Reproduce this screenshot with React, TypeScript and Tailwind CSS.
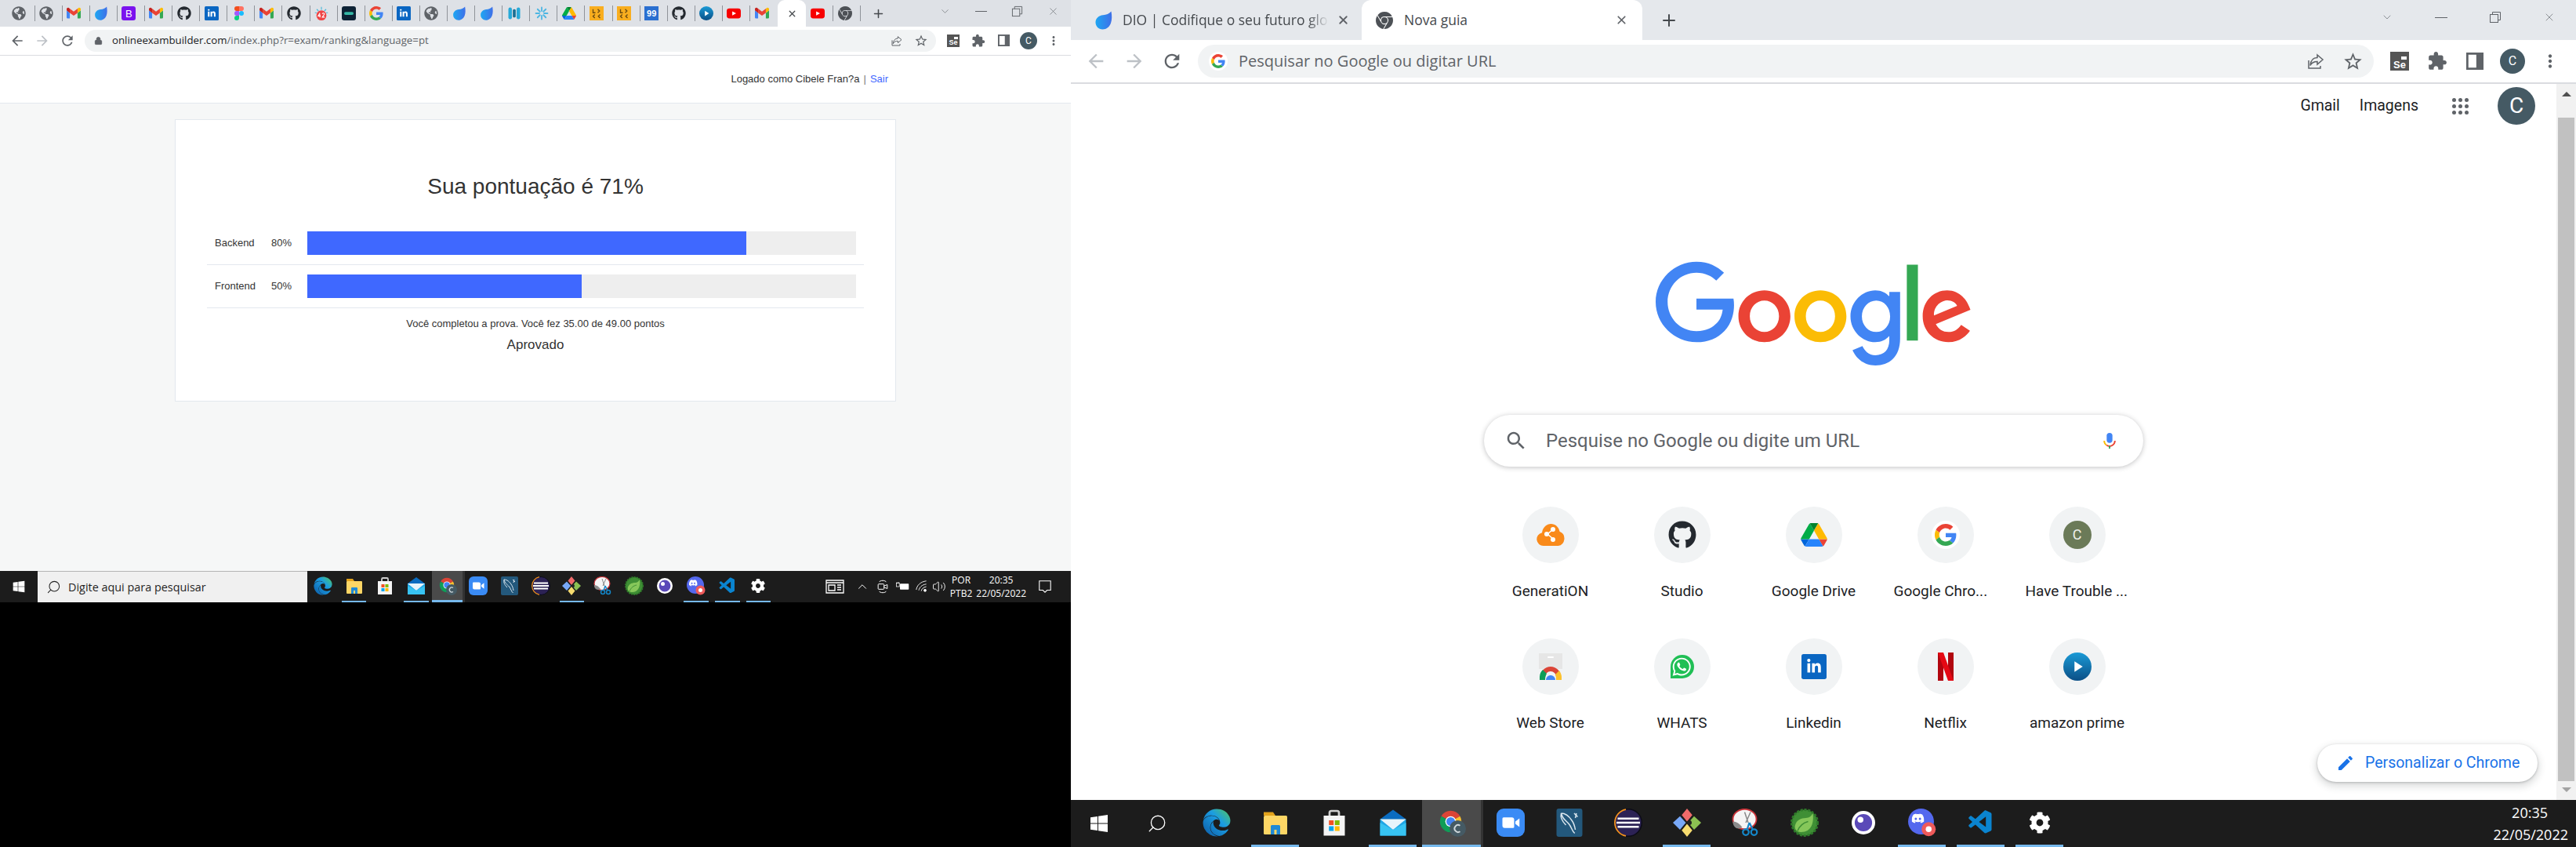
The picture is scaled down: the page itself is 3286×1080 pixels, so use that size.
import type { ReactNode } from "react";
import { ChevronDown, ChevronUp, Lock, Plus, Search, Volume2, X } from "lucide-react";
import { FaCog, FaEdge, FaGithub, FaGlobeAmericas, FaWhatsapp } from "react-icons/fa";
import { SiDiscord, SiGooglechrome } from "react-icons/si";
import { VscVscode } from "react-icons/vsc";

type IconProps = { className?: string };

const sans = "font-['Open_Sans',sans-serif]";
const arial = "font-['Liberation_Sans',Arial,sans-serif]";
const roboto = "font-['Roboto',sans-serif]";

/* ---------- material glyphs used by the browser chrome ---------- */

const material = (d: string) =>
  function MaterialIcon({ className }: IconProps) {
    return (
      <svg viewBox="0 0 24 24" className={className} fill="currentColor">
        <path d={d} />
      </svg>
    );
  };

const ArrowBack = material("M20 11H7.83l5.59-5.59L12 4l-8 8 8 8 1.41-1.41L7.83 13H20v-2z");
const ArrowForward = material("M4 11h12.17l-5.59-5.59L12 4l8 8-8 8-1.41-1.41L16.17 13H4v-2z");
const Reload = material("M17.65 6.35C16.2 4.9 14.21 4 12 4c-4.42 0-7.99 3.58-7.99 8s3.57 8 7.99 8c3.73 0 6.84-2.55 7.73-6h-2.08c-.82 2.33-3.04 4-5.65 4-3.31 0-6-2.69-6-6s2.69-6 6-6c1.66 0 3.14.69 4.22 1.78L13 11h7V4l-2.35 2.35z");
const StarBorder = material("M22 9.24l-7.19-.62L12 2 9.19 8.63 2 9.24l5.46 4.73L5.82 21 12 17.27 18.18 21l-1.63-7.03L22 9.24zM12 15.4l-3.76 2.27 1-4.28-3.32-2.88 4.38-.38L12 6.1l1.71 4.04 4.38.38-3.32 2.88 1 4.28L12 15.4z");
const Extension = material("M20.5 11H19V7c0-1.1-.9-2-2-2h-4V3.5C13 2.12 11.88 1 10.5 1S8 2.12 8 3.5V5H4c-1.1 0-1.99.9-1.99 2v3.8H3.5c1.49 0 2.7 1.21 2.7 2.7s-1.21 2.7-2.7 2.7H2V20c0 1.1.9 2 2 2h3.8v-1.5c0-1.49 1.21-2.7 2.7-2.7 1.49 0 2.7 1.21 2.7 2.7V22H17c1.1 0 2-.9 2-2v-4h1.5c1.38 0 2.5-1.12 2.5-2.5S21.88 11 20.5 11z");
const MoreDots = material("M12 8c1.1 0 2-.9 2-2s-.9-2-2-2-2 .9-2 2 .9 2 2 2zm0 2c-1.1 0-2 .9-2 2s.9 2 2 2 2-.9 2-2-.9-2-2-2zm0 6c-1.1 0-2 .9-2 2s.9 2 2 2 2-.9 2-2-.9-2-2-2z");
const SearchGlass = material("M15.5 14h-.79l-.28-.27C15.41 12.59 16 11.11 16 9.5 16 5.91 13.09 3 9.5 3S3 5.91 3 9.5 5.91 16 9.5 16c1.61 0 3.09-.59 4.23-1.57l.27.28v.79l5 4.99L20.49 19l-4.99-5zm-6 0C7.01 14 5 11.99 5 9.5S7.01 5 9.5 5 14 7.01 14 9.5 11.99 14 9.5 14z");
const Edit = material("M3 17.25V21h3.75L17.81 9.94l-3.75-3.75L3 17.25zM20.71 7.04c.39-.39.39-1.02 0-1.41l-2.34-2.34c-.39-.39-1.02-.39-1.41 0l-1.83 1.83 3.75 3.75 1.83-1.83z");

/* ---------- logos and favicons ---------- */

const GoogleG = ({ className }: IconProps) => (
  <svg viewBox="0 0 48 48" className={className}>
    <path fill="#EA4335" d="M24 9.5c3.54 0 6.71 1.22 9.21 3.6l6.85-6.85C35.9 2.38 30.47 0 24 0 14.62 0 6.51 5.38 2.56 13.22l7.98 6.19C12.43 13.72 17.74 9.5 24 9.5z" />
    <path fill="#4285F4" d="M46.98 24.55c0-1.57-.15-3.09-.38-4.55H24v9.02h12.94c-.58 2.96-2.26 5.48-4.78 7.18l7.73 6c4.51-4.18 7.09-10.36 7.09-17.65z" />
    <path fill="#FBBC05" d="M10.53 28.59c-.48-1.45-.76-2.99-.76-4.59s.27-3.14.76-4.59l-7.98-6.19C.92 16.46 0 20.12 0 24c0 3.88.92 7.54 2.56 10.78l7.97-6.19z" />
    <path fill="#34A853" d="M24 48c6.48 0 11.93-2.13 15.89-5.81l-7.73-6c-2.15 1.45-4.92 2.3-8.16 2.3-6.26 0-11.57-4.22-13.47-9.91l-7.98 6.19C6.51 42.62 14.62 48 24 48z" />
  </svg>
);

const GoogleLogo = ({ className }: IconProps) => (
  <svg viewBox="0 0 272 92" className={className}>
    <path fill="#EA4335" d="M115.75 47.18c0 12.77-9.99 22.18-22.25 22.18s-22.25-9.41-22.25-22.18C71.25 34.32 81.24 25 93.5 25s22.25 9.32 22.25 22.18zm-9.74 0c0-7.98-5.79-13.44-12.51-13.44S80.99 39.2 80.99 47.18c0 7.9 5.79 13.44 12.51 13.44s12.51-5.55 12.51-13.44z" />
    <path fill="#FBBC05" d="M163.75 47.18c0 12.77-9.99 22.18-22.25 22.18s-22.25-9.41-22.25-22.18c0-12.85 9.99-22.18 22.25-22.18s22.25 9.32 22.25 22.18zm-9.74 0c0-7.98-5.79-13.44-12.51-13.44s-12.51 5.46-12.51 13.44c0 7.9 5.79 13.44 12.51 13.44s12.51-5.55 12.51-13.44z" />
    <path fill="#4285F4" d="M209.75 26.34v39.82c0 16.38-9.66 23.07-21.08 23.07-10.75 0-17.22-7.19-19.66-13.07l8.48-3.53c1.51 3.61 5.21 7.87 11.17 7.87 7.31 0 11.84-4.51 11.84-13v-3.19h-.34c-2.18 2.69-6.38 5.04-11.68 5.04-11.09 0-21.25-9.66-21.25-22.09 0-12.52 10.16-22.26 21.25-22.26 5.29 0 9.49 2.35 11.68 4.96h.34v-3.61h9.25zm-8.56 20.92c0-7.81-5.21-13.52-11.84-13.52-6.72 0-12.35 5.71-12.35 13.52 0 7.73 5.63 13.36 12.35 13.36 6.63 0 11.84-5.63 11.84-13.36z" />
    <path fill="#34A853" d="M225 3v65h-9.5V3h9.5z" />
    <path fill="#EA4335" d="M262.02 54.48l7.56 5.04c-2.44 3.61-8.32 9.83-18.48 9.83-12.6 0-22.01-9.74-22.01-22.18 0-13.19 9.49-22.18 20.92-22.18 11.51 0 17.14 9.16 18.98 14.11l1.01 2.52-29.65 12.28c2.27 4.45 5.8 6.72 10.75 6.72 4.96 0 8.4-2.44 10.92-6.14zm-23.27-7.98l19.82-8.23c-1.09-2.77-4.37-4.7-8.23-4.7-4.95 0-11.84 4.37-11.59 12.93z" />
    <path fill="#4285F4" d="M35.29 41.41V32H67c.31 1.64.47 3.58.47 5.68 0 7.06-1.93 15.79-8.15 22.01-6.05 6.3-13.78 9.66-24.02 9.66C16.32 69.35.36 53.89.36 34.91.36 15.93 16.32.47 35.3.47c10.5 0 17.98 4.12 23.6 9.49l-6.64 6.64c-4.03-3.78-9.49-6.72-16.97-6.72-13.86 0-24.7 11.17-24.7 25.03 0 13.86 10.84 25.03 24.7 25.03 8.99 0 14.11-3.61 17.39-6.89 2.66-2.66 4.41-6.46 5.1-11.65l-22.49.01z" />
  </svg>
);

const Drive = ({ className }: IconProps) => (
  <svg viewBox="0 0 87.3 78" className={className}>
    <path d="m6.6 66.85 3.85 6.65c.8 1.4 1.95 2.5 3.3 3.3l13.75-23.8h-27.5c0 1.55.4 3.1 1.2 4.5z" fill="#0066da" />
    <path d="m43.65 25-13.75-23.8c-1.35.8-2.5 1.9-3.3 3.3l-25.4 44a9.06 9.06 0 0 0 -1.2 4.5h27.5z" fill="#00ac47" />
    <path d="m73.55 76.8c1.35-.8 2.5-1.9 3.3-3.3l1.6-2.75 7.65-13.25c.8-1.4 1.2-2.95 1.2-4.5h-27.502l5.852 11.5z" fill="#ea4335" />
    <path d="m43.65 25 13.75-23.8c-1.35-.8-2.9-1.2-4.5-1.2h-18.5c-1.6 0-3.15.45-4.5 1.2z" fill="#00832d" />
    <path d="m59.8 53h-32.3l-13.75 23.8c1.35.8 2.9 1.2 4.5 1.2h50.8c1.6 0 3.15-.45 4.5-1.2z" fill="#2684fc" />
    <path d="m73.4 26.5-12.7-22c-.8-1.4-1.95-2.5-3.3-3.3l-13.75 23.8 16.15 28h27.45c0-1.55-.4-3.1-1.2-4.5z" fill="#ffba00" />
  </svg>
);

const Gmail = ({ className }: IconProps) => (
  <svg viewBox="0 0 24 24" className={className}>
    <path fill="#4285F4" d="M1.64 20.5H5.45V11.2L0 7.1V18.86C0 19.77.73 20.5 1.64 20.5z" />
    <path fill="#34A853" d="M18.55 20.5h3.81c.91 0 1.64-.73 1.64-1.64V7.1l-5.45 4.1z" />
    <path fill="#FBBC04" d="M18.55 4.1v7.1L24 7.1V4.9c0-2-2.3-3.2-3.9-2z" />
    <path fill="#EA4335" d="M5.45 11.2V4.1L12 9l6.55-4.9v7.1L12 16.1z" />
    <path fill="#C5221F" d="M0 4.9v2.2l5.45 4.1V4.1L3.9 2.9C2.3 1.7 0 2.9 0 4.9z" />
  </svg>
);

const Dio = ({ className }: IconProps) => (
  <svg viewBox="0 0 24 24" className={className}>
    <path fill="url(#dioGrad)" d="M21.5 0.5C22.5 6 22.6 11 21 15.5 19.3 20.3 15.4 23.5 10.5 23.5 5.5 23.5 1.5 19.6 1.5 14.5 1.5 9.4 5.6 5.6 11 5.2 15.2 4.9 18.8 3.6 21.5 0.5Z" />
  </svg>
);

const LinkedIn = ({ className }: IconProps) => (
  <svg viewBox="0 0 24 24" className={className}>
    <rect width="24" height="24" rx="2" fill="#0a66c2" />
    <svg x="4.5" y="4.5" width="15" height="15" viewBox="0 0 448 512">
      <path fill="#fff" d="M100.28 448H7.4V148.9h92.88zM53.79 108.1C24.09 108.1 0 83.5 0 53.8a53.79 53.79 0 0 1 107.58 0c0 29.7-24.1 54.3-53.79 54.3zM447.9 448h-92.68V302.4c0-34.7-.7-79.2-48.29-79.2-48.29 0-55.69 37.7-55.69 76.7V448h-92.78V148.9h89.08v40.8h1.3c12.4-23.5 42.69-48.3 87.88-48.3 94 0 111.28 61.9 111.28 142.3V448z" />
    </svg>
  </svg>
);

const Figma = ({ className }: IconProps) => (
  <svg viewBox="0 0 24 36" className={className}>
    <path fill="#0acf83" d="M6 36a6 6 0 0 0 6-6v-6H6a6 6 0 0 0 0 12z" />
    <path fill="#a259ff" d="M0 18a6 6 0 0 1 6-6h6v12H6a6 6 0 0 1-6-6z" />
    <path fill="#f24e1e" d="M0 6a6 6 0 0 1 6-6h6v12H6A6 6 0 0 1 0 6z" />
    <path fill="#ff7262" d="M12 0h6a6 6 0 0 1 0 12h-6z" />
    <path fill="#1abcfe" d="M24 18a6 6 0 1 1-12 0 6 6 0 0 1 12 0z" />
  </svg>
);

const Spinner = ({ className }: IconProps) => (
  <svg viewBox="0 0 24 24" className={className} stroke="#4db6e2" strokeWidth="2.4" strokeLinecap="round">
    <path d="M12 2v6M12 16v6M2 12h6M16 12h6M5 5l4 4M15 15l4 4M19 5l-4 4M9 15l-4 4" />
  </svg>
);

const Bars = ({ className }: IconProps) => (
  <svg viewBox="0 0 24 24" className={className} fill="#27a9d8">
    <rect x="2" y="2" width="6" height="20" rx="3" />
    <rect x="9.5" y="5" width="5" height="14" rx="2" fill="#1b6f93" />
    <rect x="16" y="2" width="6" height="20" rx="3" />
  </svg>
);

const DarkPill = ({ className }: IconProps) => (
  <svg viewBox="0 0 24 24" className={className}>
    <rect width="24" height="24" rx="4" fill="#0d2235" />
    <rect x="4" y="9.5" width="16" height="5" rx="2.5" fill="#35b8a6" />
  </svg>
);

const Badge42 = ({ className }: IconProps) => (
  <svg viewBox="0 0 24 24" className={className}>
    <path stroke="#48b6d8" strokeWidth="1.5" d="M12 1v5M4 5l3 3M20 5l-3 3M1 11h3M23 11h-3" />
    <circle cx="12" cy="15.5" r="8.5" fill="#ef4444" />
    <path stroke="#fff" strokeWidth="1.5" fill="none" d="M9.5 11.5l-3 5h4M9.5 14v5M13.5 13c1-2 4-1.500 3.500.5-.4 1.400-2.500 3-3.500 5h4" />
  </svg>
);

const Llc = ({ className }: IconProps) => (
  <svg viewBox="0 0 24 24" className={className}>
    <rect width="24" height="24" fill="#f9ae1f" />
    <path stroke="#6b4a10" strokeWidth="1.8" fill="none" d="M6 5v6h4M14 5l3 3-3 3M9 14l-3 3 3 3M18 14l-3 3 3 3" />
  </svg>
);

const NinetyNine = ({ className }: IconProps) => (
  <div className={`flex items-center justify-center bg-[#2a6fd0] text-[11px] font-bold leading-none text-white ${arial} ${className}`}>99</div>
);

const Bootstrap = ({ className }: IconProps) => (
  <div className={`flex items-center justify-center rounded-[3px] bg-[#7a12ee] text-[13px] leading-none text-white ${arial} ${className}`}>B</div>
);

const Prime = ({ className }: IconProps) => (
  <svg viewBox="0 0 24 24" className={className}>
    <circle cx="12" cy="12" r="12" fill="url(#primeGrad)" />
    <path fill="#fff" d="M9.500 7.500l7 4.500-7 4.500z" />
  </svg>
);

const YouTube = ({ className }: IconProps) => (
  <svg viewBox="0 0 24 24" className={className}>
    <rect y="3.500" width="24" height="17" rx="4.500" fill="#f70000" />
    <path fill="#fff" d="M9.500 8.500l6.500 3.500-6.500 3.500z" />
  </svg>
);

const SeIcon = ({ className, cam }: IconProps & { cam: string }) => (
  <div className={`flex flex-col items-center justify-end bg-[#555] font-bold leading-[1.05] text-white ${arial} ${className}`}>
    <span className={`self-end bg-white ${cam}`} />
    Se
  </div>
);

const SidePanel = ({ className }: IconProps) => (
  <svg viewBox="0 0 24 24" className={className}>
    <rect x="1.500" y="1.500" width="21" height="21" fill="#fff" stroke="#5f6368" strokeWidth="3" />
    <rect x="14" y="2" width="8" height="20" fill="#5f6368" />
  </svg>
);

const RestoreIcon = ({ className }: IconProps) => (
  <svg viewBox="0 0 16 16" className={className} fill="none" stroke="currentColor">
    <rect x="1.500" y="4.500" width="10" height="10" />
    <path d="M4.500 4.500v-3h10v10h-3" />
  </svg>
);

const ShareBox = ({ className }: IconProps) => (
  <svg viewBox="0 0 24 24" className={className} fill="none" stroke="currentColor" strokeWidth="1.500">
    <path d="M3 11v10h15v-3" />
    <path d="M14 4l7 6-7 6v-3.500c-4 0-7 1-9 5 .5-6 3.500-10 9-10z" />
  </svg>
);

/* ---------- taskbar apps ---------- */

const WindowsLogo = ({ className }: IconProps) => (
  <svg viewBox="0 0 24 24" className={className} fill="#fff">
    <path d="M1 4.200l9-1.300v8.600H1zM11 2.700L23 1v10.500H11zM1 12.500h9v8.600l-9-1.300zM11 12.500h12V23l-12-1.700z" />
  </svg>
);

const Explorer = ({ className }: IconProps) => (
  <svg viewBox="0 0 24 24" className={className}>
    <path fill="#e2a21b" d="M2 3h8l2 3H2z" />
    <rect x="2" y="6" width="20" height="16" rx="1" fill="#fdd665" />
    <path fill="#1f8ad6" d="M8 22v-7a1 1 0 0 1 1-1h6a1 1 0 0 1 1 1v7h-3v-4h-2v4z" />
  </svg>
);

const StoreBag = ({ className }: IconProps) => (
  <svg viewBox="0 0 24 24" className={className}>
    <path fill="none" stroke="#cfcfcf" strokeWidth="1.800" d="M8 8V3.500a1.500 1.500 0 0 1 1.500-1.500h5a1.500 1.500 0 0 1 1.500 1.500V8" />
    <rect x="3" y="6" width="18" height="17" fill="#f4f4f4" />
    <rect x="7.500" y="10" width="4" height="4" fill="#f25022" />
    <rect x="12.500" y="10" width="4" height="4" fill="#7fba00" />
    <rect x="7.500" y="15" width="4" height="4" fill="#00a4ef" />
    <rect x="12.500" y="15" width="4" height="4" fill="#ffb900" />
  </svg>
);

const Mail = ({ className }: IconProps) => (
  <svg viewBox="0 0 24 24" className={className}>
    <path fill="#0a6cc0" d="M1 9l11-8 11 8z" />
    <rect x="1" y="9" width="22" height="14" fill="#1fa6e6" />
    <path fill="#e6f4fb" d="M1 9h22l-11 9z" />
    <path fill="#37c3f2" d="M1 23V12l11 6 11-6v11z" />
  </svg>
);

const ZoomApp = ({ className }: IconProps) => (
  <svg viewBox="0 0 24 24" className={className}>
    <rect width="24" height="24" rx="6" fill="#3a8bf5" />
    <path fill="#fff" d="M5 8.500a1 1 0 0 1 1-1h7a2 2 0 0 1 2 2v6a1 1 0 0 1-1 1H7a2 2 0 0 1-2-2zM16 11l3.500-2.700v7.400L16 13z" />
  </svg>
);

const MysqlApp = ({ className }: IconProps) => (
  <svg viewBox="0 0 24 24" className={className}>
    <rect x="1" width="22" height="24" rx="2" fill="#23587c" />
    <path fill="none" stroke="#dbe7ef" strokeWidth="1" d="M5 4c1 5 4 6 6.500 9s2.500 6 5 8M5 4c-1 4 1 7 4 10M5 4c4 0 7 3 9 6 1.500 2 2.500 5 3 8M16 4l3 3M18 4l-1 4" />
  </svg>
);

const Eclipse = ({ className }: IconProps) => (
  <svg viewBox="0 0 24 24" className={className}>
    <circle cx="12" cy="12" r="11.500" fill="#2c2255" stroke="#0c0c18" />
    <path fill="none" stroke="#f7941e" strokeWidth="1.200" d="M10 .7A11.500 11.500 0 0 0 10 23.300" />
    <path stroke="#fff" strokeWidth="1.800" d="M3 8.500h18M2 12h20M3 15.500h18" />
  </svg>
);

const Kraken = ({ className }: IconProps) => (
  <svg viewBox="0 0 24 24" className={className}>
    <path fill="#ef6a6a" d="M12 0l4.500 5.500L12 11 7.500 5.500z" />
    <path fill="#78a8f8" d="M6 6.500L11 12l-5 6-6-6z" />
    <path fill="#8cc152" d="M18 6.500l6 5.500-6 6-5-6z" />
    <path fill="#f7dc6f" d="M12 13l4.500 5.500L12 24l-4.500-5.500z" />
    <circle cx="14" cy="12" r="2" fill="#222" />
  </svg>
);

const Snip = ({ className }: IconProps) => (
  <svg viewBox="0 0 24 24" className={className}>
    <ellipse cx="11" cy="9" rx="10" ry="8.500" fill="#f5f5f5" stroke="#c9343a" strokeWidth="1.200" />
    <path fill="#8b8b8b" d="M1 11c3 0 6 2 8 5-3 2-8 1-8-5z" />
    <path stroke="#888" strokeWidth="1" d="M11 3l3 9M16 3l-4 9" />
    <circle cx="12" cy="20" r="2.500" fill="none" stroke="#1487c9" strokeWidth="1.500" />
    <circle cx="19" cy="20" r="2.500" fill="none" stroke="#1487c9" strokeWidth="1.500" />
    <path stroke="#1487c9" strokeWidth="1.500" d="M13 18l2-6M18 18l-3-6" />
  </svg>
);

const Spring = ({ className }: IconProps) => (
  <svg viewBox="0 0 24 24" className={className}>
    <circle cx="12" cy="12" r="11" fill="#3f8f35" stroke="#2f7a2a" strokeWidth="2" strokeDasharray="2 1.200" />
    <path fill="#86c75a" d="M19 4c1 8-1 16-10 16-4 0-6-3-5-6 1-4 5-6 9-6 3 0 5-2 6-4z" />
    <path fill="none" stroke="#3f8f35" strokeWidth="1" d="M6 19c2-5 5-7 9-8" />
  </svg>
);

const Discord = ({ className }: IconProps) => (
  <svg viewBox="0 0 24 24" className={className}>
    <circle cx="11" cy="11" r="11" fill="#5468ee" />
    <svg x="3" y="3" width="16" height="16" viewBox="0 0 24 24">
      <SiDiscord color="#fff" />
    </svg>
    <circle cx="17.500" cy="17.500" r="6" fill="#ee5a5a" />
    <circle cx="17.500" cy="17.500" r="2.500" fill="#fff" />
  </svg>
);

const CircleApp = ({ className }: IconProps) => (
  <svg viewBox="0 0 24 24" className={className}>
    <circle cx="12" cy="12" r="8.700" fill="#5a49b8" stroke="#fff" strokeWidth="2.600" />
    <circle cx="9.500" cy="9.500" r="2.500" fill="#fff" />
  </svg>
);

const ChromeBadged = ({ className }: IconProps) => (
  <svg viewBox="0 0 24 24" className={className}>
    <svg width="22" height="22" viewBox="0 0 48 48">
      <path fill="#db4437" d="M24 24 L6.680 14 A20 20 0 0 1 41.320 14 Z" />
      <path fill="#fbc02d" d="M24 24 L41.320 14 A20 20 0 0 1 24 44 Z" />
      <path fill="#0f9d58" d="M24 24 L24 44 A20 20 0 0 1 6.680 14 Z" />
      <circle cx="24" cy="24" r="10" fill="#fff" />
      <circle cx="24" cy="24" r="8" fill="#4285f4" />
    </svg>
    <circle cx="17" cy="17" r="7" fill="#455a64" />
    <path d="M19 14.500a3 3 0 1 0 0 5" fill="none" stroke="#cfd8dc" strokeWidth="1.300" />
  </svg>
);

const Newspaper = ({ className }: IconProps) => (
  <svg viewBox="0 0 24 20" className={className} fill="none" stroke="currentColor" strokeWidth="1.300">
    <path d="M1 2h22v16H1zM1 5h22M4 8h8v7H4zM15 8h5M15 11h5M15 14h5" />
  </svg>
);

const Battery = ({ className }: IconProps) => (
  <svg viewBox="0 0 24 16" className={className} fill="#fff">
    <rect x="8" y="3" width="15" height="10" rx="1" />
    <rect x="2" y="2" width="5" height="6" fill="none" stroke="#fff" />
    <path d="M3 0v2M6 0v2" stroke="#fff" />
  </svg>
);

const Wifi = ({ className }: IconProps) => (
  <svg viewBox="0 0 20 20" className={className} fill="none" stroke="currentColor" strokeWidth="1.100">
    <path d="M1 15C2 8 8 2 17 1M5 16c1-5 5-9 12-10M9 17c.5-3 3-6 8-7" />
    <circle cx="15" cy="16" r="1.800" fill="currentColor" />
  </svg>
);

const Meet = ({ className }: IconProps) => (
  <svg viewBox="0 0 16 24" className={className} fill="none" stroke="currentColor" strokeWidth="1.200">
    <path d="M3 5c0-3 10-3 10 0M3 19c0 3 10 3 10 0" />
    <rect x="1" y="8" width="9" height="8" rx="1" />
    <path d="M10 11l5-2v6l-5-2" />
  </svg>
);

const Notification = ({ className }: IconProps) => (
  <svg viewBox="0 0 20 20" className={className} fill="none" stroke="currentColor" strokeWidth="1.200">
    <path d="M2 2h16v13h-5l-3 3-3-3H2z" />
  </svg>
);

/* ---------- shortcut icons ---------- */

const CloudShare = ({ className }: IconProps) => (
  <svg viewBox="0 0 36 30" className={className}>
    <path fill="#f98a1a" d="M9 29a8.500 8.500 0 0 1-2-16.800C8 5.500 13 1 18.500 1c5.500 0 10 4 11 9.800A9.500 9.500 0 0 1 27.500 29z" />
    <path stroke="#fff" strokeWidth="1.500" d="M21 8l-7 6 7 6" fill="none" />
    <circle cx="21" cy="8" r="3" fill="#fff" />
    <circle cx="13" cy="14" r="3" fill="#fff" />
    <circle cx="21" cy="21" r="3" fill="#fff" />
  </svg>
);

const WebStore = ({ className }: IconProps) => (
  <svg viewBox="0 0 36 36" className={className}>
    <rect x="3" y="1" width="30" height="20" fill="#e6e6e6" />
    <rect x="14" y="5" width="8" height="2" rx="1" fill="#fff" />
    <path fill="#db4437" d="M5 31a13 13 0 0 1 26 0h-6a7 7 0 0 0-14 0z" />
    <path fill="#0f9d58" d="M4 35v-4a13 13 0 0 1 4-9l5 5c-1 2-2 4-2 8z" />
    <path fill="#fbc02d" d="M32 35v-4c0-2-1-5-3-8l-5 5c1 2 1 4 1 7z" />
    <path fill="#4285f4" d="M12 35a6 6 0 0 1 12 0z" />
  </svg>
);

const WhatsApp = ({ className }: IconProps) => (
  <div className={`flex items-center justify-center rounded-full rounded-bl-[4px] bg-[#20bf55] ${className}`}>
    <FaWhatsapp className="h-[88%] w-[88%] text-white" />
  </div>
);

const Netflix = ({ className }: IconProps) => (
  <svg viewBox="0 0 20 36" className={className}>
    <path fill="#b1060f" d="M0 0h7v36l-7 0zM13 0h7v36h-7z" />
    <path fill="#e50914" d="M0 0h7l13 36h-7z" />
  </svg>
);

const CProfile = ({ className }: IconProps) => (
  <div className={`flex items-center justify-center rounded-full bg-[#6b7a58] text-[18px] text-[#eef0ea] ${roboto} ${className}`}>C</div>
);

/* ---------- data ---------- */

const Globe = ({ className }: IconProps) => <FaGlobeAmericas className={`text-[#5f6368] ${className}`} />;
const Github = ({ className }: IconProps) => <FaGithub className={`text-[#24292f] ${className}`} />;
const ChromeGray = ({ className }: IconProps) => <SiGooglechrome className={`text-[#4d5156] ${className}`} />;

const smallTabs = [
  Globe, Globe, Gmail, Dio, Bootstrap, Gmail, Github, LinkedIn, Figma, Gmail, Github, Badge42, DarkPill, GoogleG,
  LinkedIn, Globe, Dio, Dio, Bars, Spinner, Drive, Llc, Llc, NinetyNine, Github, Prime, YouTube, Gmail,
];

const Edge = ({ className }: IconProps) => <FaEdge fill="url(#edgeGrad)" className={className} />;
const Code = ({ className }: IconProps) => <VscVscode className={`text-[#0a84d0] ${className}`} />;
const Gear = ({ className }: IconProps) => <FaCog className={`scale-[0.78] text-white ${className}`} />;

const taskApps = [
  { icon: Edge, open: false },
  { icon: Explorer, open: true },
  { icon: StoreBag, open: false },
  { icon: Mail, open: true },
  { icon: ChromeBadged, open: true, active: true },
  { icon: ZoomApp, open: false },
  { icon: MysqlApp, open: false },
  { icon: Eclipse, open: false },
  { icon: Kraken, open: true },
  { icon: Snip, open: false },
  { icon: Spring, open: false },
  { icon: CircleApp, open: false },
  { icon: Discord, open: true },
  { icon: Code, open: true },
  { icon: Gear, open: true },
];

const shortcuts = [
  { label: "GeneratiON", icon: <CloudShare className="h-[30px] w-[36px]" /> },
  { label: "Studio", icon: <Github className="h-[36px] w-[36px]" /> },
  { label: "Google Drive", icon: <Drive className="h-[30px] w-[34px]" /> },
  { label: "Google Chro...", icon: <span className="flex h-[36px] w-[36px] items-center justify-center rounded-full bg-white"><GoogleG className="h-[28px] w-[28px]" /></span>, cut: true },
  { label: "Have Trouble ...", icon: <CProfile className="h-[36px] w-[36px]" />, cut: true },
  { label: "Web Store", icon: <WebStore className="h-[36px] w-[36px]" /> },
  { label: "WHATS", icon: <WhatsApp className="h-[30px] w-[30px]" /> },
  { label: "Linkedin", icon: <LinkedIn className="h-[32px] w-[32px]" /> },
  { label: "Netflix", icon: <Netflix className="h-[36px] w-[22px]" /> },
  { label: "amazon prime", icon: <Prime className="h-[36px] w-[36px]" /> },
];

const pageBars = [
  { name: "Backend", pct: 80 },
  { name: "Frontend", pct: 50 },
];

/* ---------- shared bits ---------- */

function Avatar({ className }: IconProps) {
  return <div className={`flex items-center justify-center rounded-full bg-[#455a64] text-white ${className}`}>C</div>;
}

function WindowButtons({ slot, icon, line }: { slot: string; icon: string; line: string }) {
  return (
    <div className="ml-auto flex h-full items-start text-[#5f6368]">
      <div className={`flex items-center justify-center ${slot}`}><ChevronDown className={icon} strokeWidth={1} /></div>
      <div className={`flex items-center justify-center ${slot}`}><div className={`h-px bg-[#5f6368] ${line}`} /></div>
      <div className={`flex items-center justify-center ${slot}`}><RestoreIcon className={icon} /></div>
      <div className={`flex items-center justify-center ${slot}`}><X className={icon} strokeWidth={1} /></div>
    </div>
  );
}

function Taskbar({ big }: { big?: boolean }) {
  const slot = big ? "w-[75px]" : "w-[39.7px]";
  const icon = big ? "h-[36px] w-[36px]" : "h-[24px] w-[24px]";
  const mark = big ? "mx-[7px] h-[3px]" : "mx-[4px] h-[2px]";
  return (
    <div className={`flex shrink-0 items-stretch bg-[#1c1c1c] ${big ? "h-[60px]" : "h-[40px]"}`}>
      <div className={`flex items-center justify-center ${big ? "w-[72px]" : "w-[48px]"}`}>
        <WindowsLogo className={big ? "h-[24px] w-[24px]" : "h-[16px] w-[16px]"} />
      </div>
      {big ? (
        <div className="flex w-[76px] items-center justify-center">
          <Search className="h-[26px] w-[26px] -scale-x-100 text-white" strokeWidth={1.2} />
        </div>
      ) : (
        <div className={`flex w-[344px] items-center gap-[9px] border-t border-[#b5b5b5] bg-[#f0f0f0] pl-[11px] text-[14.4px] text-[#1f1f1f] ${sans}`}>
          <Search className="h-[19px] w-[19px] -scale-x-100 text-[#222]" strokeWidth={1.3} />
          <span>Digite aqui para pesquisar</span>
        </div>
      )}
      <div className="flex">
        {taskApps.map(({ icon: Icon, open, active }, i) => (
          <div key={i} className={`flex flex-col ${slot} ${active ? "bg-[#4a4a4a] shadow-[3px_0_0_#333]" : ""}`}>
            <div className="flex flex-1 items-center justify-center">
              <Icon className={icon} />
            </div>
            <div className={`${active ? "h-[3px]" : mark} ${open ? "bg-[#76b9ed]" : ""}`} />
          </div>
        ))}
      </div>
      {big ? (
        <div className={`ml-auto flex w-[103px] flex-col items-end justify-center gap-[6px] pr-[10px] text-[18px] leading-[22px] text-white ${sans}`}>
          <span className="pr-[26px]">20:35</span>
          <span>22/05/2022</span>
        </div>
      ) : (
        <div className={`ml-auto flex items-center text-white ${sans}`}>
          <Newspaper className="mr-[14px] h-[20px] w-[24px]" />
          <ChevronUp className="mr-[10px] h-[18px] w-[18px]" strokeWidth={1.3} />
          <Meet className="mr-[9px] h-[20px] w-[14px]" />
          <Battery className="mr-[8px] h-[14px] w-[18px]" />
          <Wifi className="mr-[5px] h-[16px] w-[16px]" />
          <Volume2 className="mr-[5px] h-[18px] w-[18px]" strokeWidth={1.2} />
          <div className="flex flex-col items-center gap-[2px] text-[12px] leading-[15px]">
            <span>POR</span>
            <span>PTB2</span>
          </div>
          <div className="ml-[5px] flex flex-col items-center gap-[2px] text-[12px] leading-[15px]">
            <span>20:35</span>
            <span>22/05/2022</span>
          </div>
          <Notification className="ml-[15px] mr-[24px] h-[18px] w-[18px]" />
        </div>
      )}
    </div>
  );
}

/* ---------- windows ---------- */

function ExamWindow() {
  return (
    <div className="flex h-[768px] w-[1366px] shrink-0 flex-col bg-white">
      <div className="flex h-[34px] shrink-0 items-center bg-[#dee1e6] pl-[9.5px]">
        {smallTabs.map((Icon, i) => (
          <div key={i} className="flex w-[35.1px] items-center justify-between pl-[5.5px]">
            <Icon className="h-[18px] w-[18px]" />
            <span className={`h-[20px] w-px ${i === 27 ? "" : "bg-[#8f9399]"}`} />
          </div>
        ))}
        <div className="flex h-full w-[36px] items-center justify-center rounded-t-[9px] bg-white">
          <X className="h-[13px] w-[13px] text-[#45494d]" strokeWidth={2.4} />
        </div>
        <div className="flex w-[35.1px] items-center justify-between pl-[5.5px]">
          <YouTube className="h-[18px] w-[18px]" />
          <span className="h-[20px] w-px bg-[#8f9399]" />
        </div>
        <div className="flex w-[35.1px] items-center justify-between pl-[5.5px]">
          <ChromeGray className="h-[18px] w-[18px]" />
          <span className="h-[20px] w-px bg-[#8f9399]" />
        </div>
        <div className="ml-[4px] flex w-[36px] justify-center">
          <Plus className="h-[17px] w-[17px] text-[#45494d]" strokeWidth={2.2} />
        </div>
        <WindowButtons slot="h-[28px] w-[46px]" icon="h-[15px] w-[15px]" line="w-[15px]" />
      </div>

      <div className="flex h-[37px] shrink-0 items-center border-b border-[#dadce0] pb-[1px] pl-[6px]">
        <div className="flex w-[32px] justify-center"><ArrowBack className="h-[20px] w-[20px] text-[#5f6368]" /></div>
        <div className="flex w-[32px] justify-center"><ArrowForward className="h-[20px] w-[20px] text-[#bdc1c6]" /></div>
        <div className="flex w-[32px] justify-center"><Reload className="h-[20px] w-[20px] text-[#5f6368]" /></div>
        <div className={`ml-[6px] flex h-[28px] w-[1086px] items-center rounded-full bg-[#f1f3f4] pl-[12px] text-[13.27px] ${sans}`}>
          <Lock className="h-[12px] w-[11px] text-[#5f6368]" fill="#5f6368" />
          <span className="ml-[12px] text-[#202124]">onlineexambuilder.com</span>
          <span className="text-[#5f6368]">/index.php?r=exam/ranking&amp;language=pt</span>
          <ShareBox className="ml-auto h-[16px] w-[16px] text-[#5f6368]" />
          <StarBorder className="ml-[14px] mr-[10px] h-[18px] w-[18px] text-[#5f6368]" />
        </div>
        <div className="ml-[6px] flex w-[32px] justify-center"><SeIcon className="h-[16px] w-[16px] text-[9px]" cam="mr-[2px] h-[3px] w-[5px]" /></div>
        <div className="flex w-[32px] justify-center"><Extension className="h-[18px] w-[18px] text-[#5f6368]" /></div>
        <div className="flex w-[32px] justify-center"><SidePanel className="h-[15px] w-[15px]" /></div>
        <div className="flex w-[32px] justify-center"><Avatar className={`h-[22px] w-[22px] text-[12px] ${roboto}`} /></div>
        <div className="flex w-[32px] justify-center"><MoreDots className="h-[18px] w-[18px] text-[#5f6368]" /></div>
      </div>

      <div className={`flex h-[61px] shrink-0 items-center justify-end border-b border-[#e3e8ee] pr-[233px] text-[13px] text-[#333] ${arial}`}>
        <span>Logado como Cibele Fran?a</span>
        <span className="mx-[5px] text-[#777]">|</span>
        <span className="text-[#3f68ff]">Sair</span>
      </div>

      <div className={`flex min-h-0 flex-1 flex-col items-center bg-[#f6f7f7] pt-[20px] text-[#333] ${arial}`}>
        <div className="flex h-[360px] w-[920px] flex-col items-center border border-[#e3e8ee] bg-white pt-[68px]">
          <h1 className="text-[28px] font-normal leading-[34px]">Sua pontuação é 71%</h1>
          <div className="mt-[28px] w-[838px]">
            {pageBars.map((bar) => (
              <div key={bar.name} className="flex items-center border-b border-[#e3e8ee] py-[12px] pl-[10px] text-[13px]">
                <span className="w-[72px]">{bar.name}</span>
                <span className="w-[46px]">{bar.pct}%</span>
                <div className="h-[30px] w-[700px] bg-[#eeeeee]">
                  <div className="h-full bg-[#3f68ff]" style={{ width: `${bar.pct}%` }} />
                </div>
              </div>
            ))}
          </div>
          <p className="mt-[11px] text-[13px] leading-[18px]">Você completou a prova. Você fez 35.00 de 49.00 pontos</p>
          <p className="mt-[7px] text-[17px] leading-[22px]">Aprovado</p>
        </div>
      </div>

      <Taskbar />
    </div>
  );
}

function NewTabWindow() {
  return (
    <div className="flex h-[1080px] min-w-0 flex-1 flex-col bg-white">
      <div className={`flex h-[51px] shrink-0 items-stretch bg-[#e5e8ec] text-[17.5px] ${sans}`}>
        <div className="flex w-[371px] items-center pl-[30px] pr-[15px] text-[#45494d]">
          <Dio className="h-[24px] w-[24px]" />
          <span className="ml-[12px] w-[263px] overflow-hidden whitespace-nowrap [mask-image:linear-gradient(to_right,black_90%,transparent)]">DIO | Codifique o seu futuro global</span>
          <X className="ml-auto h-[17px] w-[17px] text-[#5f6368]" strokeWidth={2.6} />
        </div>
        <div className="flex w-[358px] items-center rounded-t-[12px] bg-white pl-[18px] pr-[18px] text-[#45494d]">
          <ChromeGray className="h-[22px] w-[22px]" />
          <span className="ml-[14px]">Nova guia</span>
          <X className="ml-auto h-[17px] w-[17px] text-[#5f6368]" strokeWidth={2.4} />
        </div>
        <div className="ml-[14px] flex w-[40px] items-center justify-center">
          <Plus className="h-[24px] w-[24px] text-[#45494d]" strokeWidth={2} />
        </div>
        <WindowButtons slot="h-[44px] w-[69px]" icon="h-[16px] w-[16px]" line="w-[16px]" />
      </div>

      <div className="flex h-[56px] shrink-0 items-center border-b-2 border-[#dadce0] pl-[8px]">
        <div className="flex w-[48.5px] justify-center"><ArrowBack className="h-[28px] w-[28px] text-[#bdc1c6]" /></div>
        <div className="flex w-[48.5px] justify-center"><ArrowForward className="h-[28px] w-[28px] text-[#bdc1c6]" /></div>
        <div className="flex w-[48.5px] justify-center"><Reload className="h-[28px] w-[28px] text-[#5f6368]" /></div>
        <div className={`ml-[8.5px] flex h-[42px] w-[1500px] items-center rounded-full bg-[#f1f3f4] pl-[14px] text-[20px] text-[#5f6368] ${sans}`}>
          <span className="flex h-[24px] w-[24px] items-center justify-center rounded-full bg-white"><GoogleG className="h-[18px] w-[18px]" /></span>
          <span className="ml-[14px]">Pesquisar no Google ou digitar URL</span>
          <ShareBox className="ml-auto h-[24px] w-[24px]" />
          <StarBorder className="ml-[22px] mr-[13px] h-[27px] w-[27px]" />
        </div>
        <div className="ml-[9px] flex w-[48px] justify-center"><SeIcon className="h-[24px] w-[24px] text-[13px]" cam="mr-[3px] h-[4px] w-[7px]" /></div>
        <div className="flex w-[48px] justify-center"><Extension className="h-[26px] w-[26px] text-[#5f6368]" /></div>
        <div className="flex w-[48px] justify-center"><SidePanel className="h-[22px] w-[22px]" /></div>
        <div className="flex w-[48px] justify-center"><Avatar className={`h-[32px] w-[32px] text-[16px] ${roboto}`} /></div>
        <div className="flex w-[48px] justify-center"><MoreDots className="h-[26px] w-[26px] text-[#5f6368]" /></div>
      </div>

      <div className="flex min-h-0 flex-1">
        <main className={`relative flex min-w-0 flex-1 flex-col items-center ${roboto}`}>
          <div className="flex w-full items-center justify-end pr-[27px] pt-[4px] text-[19.5px] text-[#202124]">
            <span>Gmail</span>
            <span className="ml-[25px]">Imagens</span>
            <div className="ml-[41px] grid h-[24px] w-[24px] grid-cols-3 place-items-center">
              {Array.from({ length: 9 }).map((_, i) => (
                <span key={i} className="h-[5px] w-[5px] rounded-full bg-[#5f6368]" />
              ))}
            </div>
            <Avatar className="ml-[36px] h-[48px] w-[48px] text-[28px]" />
          </div>

          <GoogleLogo className="mt-[174px] h-[137px] w-[406px]" />

          <div className="mt-[59px] flex h-[66px] w-[841px] items-center rounded-full bg-white pl-[26px] pr-[32px] text-[24px] text-[#5f6368] shadow-[0_1px_6px_rgba(32,33,36,0.28)]">
            <SearchGlass className="h-[30px] w-[30px] text-[#5f6368]" />
            <span className="ml-[23px]">Pesquise no Google ou digite um URL</span>
            <svg viewBox="0 0 24 24" className="ml-auto h-[28px] w-[22px]">
              <rect x="8" y="1" width="8" height="14" rx="4" fill="#4285f4" />
              <path d="M4.500 12a7.500 7.500 0 0 0 3.500 6.300" fill="none" stroke="#fbbc04" strokeWidth="2" />
              <path d="M8 18.300a7.500 7.500 0 0 0 8 0 7.500 7.500 0 0 0 3.500-6.300" fill="none" stroke="#ea4335" strokeWidth="2" />
              <rect x="11" y="19" width="2" height="4" fill="#34a853" />
            </svg>
          </div>

          <div className="mt-[51px] grid w-[840px] grid-cols-5 text-[19px] leading-[24px] text-[#202124]">
            {shortcuts.map((s) => (
              <div key={s.label} className="flex h-[168px] flex-col items-center">
                <div className="flex h-[72px] w-[72px] items-center justify-center rounded-full bg-[#f1f3f4]">{s.icon}</div>
                <span className={`mt-[24px] w-[132px] whitespace-nowrap ${s.cut ? "text-left" : "text-center"}`}>{s.label}</span>
              </div>
            ))}
          </div>

          <button className="absolute bottom-[23px] right-[24px] flex h-[48px] w-[281px] items-center rounded-full bg-white pl-[24px] text-[19.5px] text-[#1a73e8] shadow-[0_1px_3px_rgba(60,64,67,0.3),0_4px_8px_3px_rgba(60,64,67,0.15)]">
            <Edit className="h-[24px] w-[24px]" />
            <span className="ml-[13px]">Personalizar o Chrome</span>
          </button>
        </main>

        <div className="flex w-[25px] shrink-0 flex-col items-center bg-[#f1f1f1]">
          <div className="mt-[10px] h-0 w-0 border-x-[6px] border-b-[6px] border-x-transparent border-b-[#505050]" />
          <div className="mt-[27px] h-[846px] w-[21px] bg-[#c1c1c1]" />
          <div className="mt-[8px] h-0 w-0 border-x-[6px] border-t-[6px] border-x-transparent border-t-[#a3a3a3]" />
        </div>
      </div>

      <Taskbar big />
    </div>
  );
}

export default function App(): ReactNode {
  return (
    <div className="flex h-[1080px] w-[3286px] overflow-hidden bg-black">
      <svg className="h-0 w-0">
        <defs>
          <linearGradient id="dioGrad" x1="0" y1="0" x2="1" y2="0">
            <stop offset="0" stopColor="#1ea7f2" />
            <stop offset="1" stopColor="#3f6fe8" />
          </linearGradient>
          <linearGradient id="primeGrad" x1="0" y1="0" x2="0" y2="1">
            <stop offset="0" stopColor="#1a9ad6" />
            <stop offset="1" stopColor="#0b4f86" />
          </linearGradient>
          <linearGradient id="edgeGrad" x1="0" y1="1" x2="1" y2="0">
            <stop offset="0" stopColor="#0c59a4" />
            <stop offset="0.6" stopColor="#1b9de2" />
            <stop offset="1" stopColor="#54c85b" />
          </linearGradient>
        </defs>
      </svg>
      <ExamWindow />
      <NewTabWindow />
    </div>
  );
}
